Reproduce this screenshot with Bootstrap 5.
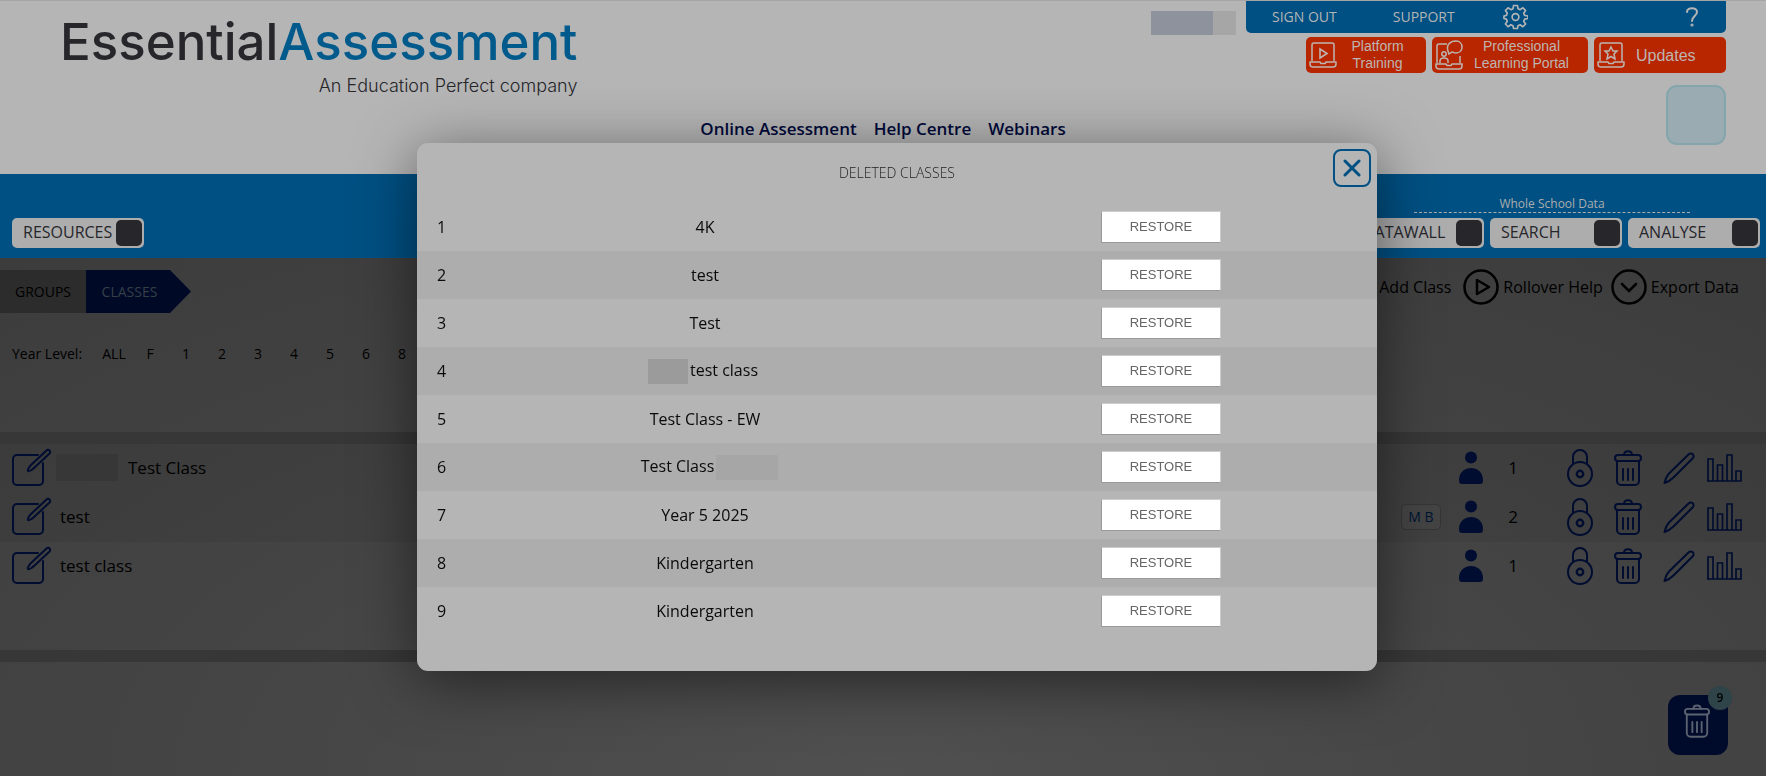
<!DOCTYPE html>
<html lang="en">
<head>
<meta charset="utf-8">
<meta name="viewport" content="width=device-width, initial-scale=1">
<title>Essential Assessment - Classes</title>
<link href="https://cdn.jsdelivr.net/npm/bootstrap@5.3.0/dist/css/bootstrap.min.css" rel="stylesheet">
<style>
  body { font-family: "Open Sans", sans-serif; font-size: 16px; line-height: 24px; color: #000; background: #b5b5b5; overflow: hidden; }
  a { color: inherit; text-decoration: none; }
  .page-shell { min-height: 100vh; border-top: 1px solid #a6a6a6; }
  .site-head { height: 173px; padding: 0 40px; }
  .side-col { flex: 1 1 0; }
  .brand { padding: 9px 0 0 20px; }
  .brand-name { font-family: "Inter", sans-serif; font-size: 51px; line-height: 64px; font-weight: 500; color: #26262b; }
  .brand-name span { color: #005a8c; }
  .brand-tag { font-family: "Inter", sans-serif; font-size: 18px; line-height: 24px; font-weight: 300; color: #26262b; }
  .main-links { font-size: 17px; font-weight: 600; color: #00093a; gap: 17px; padding-bottom: 33px; }
  .util-row { height: 32px; }
  .user-mask { width: 85px; height: 24px; margin: 10px 10px 0 0; background: linear-gradient(90deg, #8d929c 62px, #a6a6a6 62px); }
  .util-bar { width: 480px; height: 32px; background: #005083; color: #b5b5b5; font-size: 14px; line-height: 28px; border-radius: 0 0 5px 5px; padding: 0 24px 0 26px; }
  .promos { gap: 6px; margin-top: 4px; }
  .promo { height: 36px; background: #b82600; color: #bdb5b2; border: 0; border-radius: 5px; font-family: "Liberation Sans", sans-serif; font-size: 14px; line-height: 17px; padding: 0 8px 0 3px; }
  .promo-big { font-size: 16px; padding-left: 11px; }
  .avatar-box { width: 60px; height: 60px; border: 2px solid #85a5ac; background: #9aabb1; border-radius: 11px; margin-top: 12px; }
  .band { height: 84px; background: #005083; padding: 0 6px 10px 12px; }
  .pill-btn { width: 132px; height: 30px; border: 0; border-radius: 5px; background: #adadad; color: #26262b; font-size: 16px; line-height: 24px; padding: 0 2px 0 11px; }
  .pill-btn span { padding-bottom: 2px; }
  .pill-btn i { width: 26px; height: 26px; border-radius: 5px; background: #26262b; }
  .school-label { width: 276px; border-bottom: 1px dashed #adadad; color: #adadad; font-size: 12px; line-height: 16px; margin: 0 70px 5px 0; }
  .work { min-height: calc(100vh - 258px); background: radial-gradient(ellipse 62% 100% at 50% 100%, #505050 0, #454545 60%, #3c3c3c 130%); }
  .crumbs { padding-top: 12px; font-size: 14px; line-height: 43px; }
  .crumb-a { width: 86px; background: #2c2c2c; }
  .crumb-b { width: 105px; padding-right: 18px; background: #000a27; color: #363f48; clip-path: polygon(0 0, 84px 0, 100% 50%, 84px 100%, 0 100%); }
  .actions { padding: 11px 27px 0 0; gap: 4px; }
  .levels { font-size: 14px; padding: 29px 0 0 12px; height: 119px; }
  .levels a { width: 36px; text-align: center; }
  .levels span { width: 84px; }
  .strip { height: 12px; background: #373737; }
  .class-list { height: 206px; font-size: 17px; }
  .class-row { height: 49px; padding: 0 24px 2px 12px; color: #000; }
  .class-row.shade { background: rgba(0,0,0,.06); }
  .class-row svg { color: #000d30; }
  .row-tools { gap: 21px; }
  .name-mask { width: 62px; height: 27px; background: #373737; margin-right: 2px; }
  .init-tag { width: 40px; height: 26px; border: 1px solid #353535; border-radius: 5px; color: #001433; font-size: 14px; line-height: 24px; background: #444; margin-right: 18px; }
  .fab { position: fixed; right: 38px; bottom: 21px; width: 60px; height: 60px; border: 0; border-radius: 12px; background: #000a2b; padding: 0 3px 8px 0; }
  .fab svg { color: #5b6370; }
  .fab b { position: absolute; right: -4px; top: -9px; width: 24px; height: 24px; border-radius: 12px; background: #2e4448; font-size: 12px; line-height: 24px; font-weight: 600; color: #000; }
  .dlg { position: fixed; top: 143px; left: calc(50% + 14px); margin-left: -480px; width: 960px; max-width: 100%; height: 528px; background: #b5b5b5; border-radius: 11px; box-shadow: 0 10px 60px rgba(0,0,0,.5); }
  .dlg-title { font-size: 14px; font-weight: 300; line-height: 60px; color: #222; margin: 0; text-align: center; }
  .dlg-close { position: absolute; top: 6px; right: 6px; width: 38px; height: 38px; border: 2px solid #005083; border-radius: 8px; background: transparent; padding: 0; }
  .del-table { width: 100%; table-layout: fixed; }
  .del-table tr { height: 48px; }
  .del-table tr:nth-child(even) { background: #adadad; }
  .del-table td { padding: 0; text-align: center; vertical-align: middle; color: #0a0a0a; }
  .del-table td:first-child { text-align: left; padding-left: 20px; }
  .restore { display: block; margin: 0 auto; width: 120px; height: 32px; border: 1px solid #999; border-top-color: #ccc; border-right-color: #ccc; background: #fff; color: #666; font-family: "Liberation Sans", sans-serif; font-size: 13px; line-height: 20px; padding: 0; }
  .row-mask { display: inline-block; vertical-align: middle; height: 25px; }
  .mask-first { width: 40px; background: #9b9b9b; margin: 0 2px 0 -4px; }
  .mask-last { width: 62px; background: #a6a6a6; margin: 0 -9px 0 2px; }
</style>
</head>
<body>
<svg width="0" height="0" class="position-absolute" aria-hidden="true">
  <defs>
    <symbol id="edit" viewBox="0 0 40 40"><g fill="none" stroke="currentColor" stroke-width="2" stroke-linejoin="round" stroke-linecap="round"><path d="M26 7H5a4 4 0 0 0-4 4v22a4 4 0 0 0 4 4h22a4 4 0 0 0 4-4V15"/><path d="M34.500 2.500c2-2 5 1 3 3L22 20c-1 1-5 4-6 3s2-5 3-6z"/></g></symbol>
    <symbol id="person" viewBox="0 0 24 33"><circle cx="12" cy="6.500" r="6" fill="currentColor"/><path fill="currentColor" d="M0 29C0 21 6 17 12 17s12 4 12 12c0 3-1 4-3 4H3c-2 0-3-1-3-4z"/></symbol>
    <symbol id="lock" viewBox="0 0 26 38"><g fill="none" stroke="currentColor" stroke-width="2"><circle cx="13" cy="25" r="12"/><circle cx="13" cy="25" r="3.200" stroke-width="2.400"/><path d="M6 15V8a7 7 0 0 1 14 0v7"/></g></symbol>
    <symbol id="trash" viewBox="0 0 28 36"><g fill="none" stroke="currentColor" stroke-width="2" stroke-linecap="round"><rect x="1" y="5" width="26" height="6" rx="3"/><path d="M10 5c0-5 8-5 8 0M3 11v20a4 4 0 0 0 4 4h14a4 4 0 0 0 4-4V11M9 19v11M14 19v11M19 19v11"/></g></symbol>
    <symbol id="pencil" viewBox="0 0 32 32"><path d="M25.500 2.500c3-3 7 1 4 4L11 25c-3 3-6 5-9.500 6 1-4 2-7 5-10z" fill="none" stroke="currentColor" stroke-width="2" stroke-linejoin="round"/></symbol>
    <symbol id="chart" viewBox="0 0 35 28"><path d="M1 27V5h5v22M10.500 27V11h5v16M20 27V1h5v26M29 27V17h5v10zM0 27h34" fill="none" stroke="currentColor" stroke-width="1.700"/></symbol>
    <symbol id="laptop" viewBox="0 0 28 27"><g fill="none" stroke="currentColor" stroke-width="1.500" stroke-linejoin="round"><path d="M3 19V3a2 2 0 0 1 2-2h18a2 2 0 0 1 2 2v16M1 20h10l1 1.500h4l1-1.500h10v2a3 3 0 0 1-3 3H4a3 3 0 0 1-3-3z"/></g></symbol>
  </defs>
</svg>

<div class="page-shell">
  <header class="site-head d-flex">
    <div class="side-col d-flex align-items-start">
      <a href="#" class="brand d-flex flex-column align-items-end text-nowrap">
        <div class="brand-name">Essential<span>Assessment</span></div>
        <div class="brand-tag">An Education Perfect company</div>
      </a>
    </div>
    <nav class="main-links d-flex align-self-end text-nowrap">
      <a href="#">Online Assessment</a><a href="#">Help Centre</a><a href="#">Webinars</a>
    </nav>
    <div class="side-col d-flex flex-column align-items-end">
      <div class="util-row d-flex align-items-start justify-content-end">
        <div class="user-mask"></div>
        <div class="util-bar flex-shrink-0 d-flex align-items-center">
          <a href="#">SIGN OUT</a>
          <a href="#" class="ms-5 ps-2">SUPPORT</a>
          <a href="#" aria-label="Settings" class="ms-5 d-flex"><svg width="25" height="26" viewBox="0 0 26 26" fill="none" stroke="currentColor" stroke-width="1.700"><circle cx="13" cy="13" r="3.500"/><path stroke-linejoin="round" d="M11 1h4l.6 3.400 2.200 1 2.900-2 2.800 2.900-2 2.800 1 2.200 3.500.7v2.500l-3.500.7-1 2.300 2 2.800-2.800 2.800-2.900-2-2.200 1L15 25h-4l-.6-2.900-2.200-1-2.900 2-2.800-2.800 2-2.800-1-2.300L1 14.500V12l2.500-.7 1-2.200-2-2.800 2.800-2.900 2.900 2 2.200-1z"/></svg></a>
          <a href="#" aria-label="Help" class="ms-auto d-flex me-1"><svg width="12" height="20" viewBox="0 0 12 20" fill="none" stroke="currentColor" stroke-width="2" stroke-linecap="round"><path d="M1 5c0-5 10-5 10 0 0 4-5 4-5 9"/><circle cx="6" cy="18" r=".6"/></svg></a>
        </div>
      </div>
      <div class="promos d-flex">
        <button class="promo d-flex align-items-center" style="width:120px"><svg width="28" height="27" fill="none" stroke="currentColor" stroke-width="1.600"><use href="#laptop"/><path d="M11 7v9l7-4.500z"/></svg><span class="flex-fill">Platform<br>Training</span></button>
        <button class="promo d-flex align-items-center" style="width:156px"><svg width="28" height="30" viewBox="0 0 28 30" fill="none" stroke="currentColor" stroke-width="1.500"><path d="M12 4H4a2 2 0 0 0-2 2v17M25 16v7M1 24h10l1 1.500h4l1-1.500h10v2a3 3 0 0 1-3 3H4a3 3 0 0 1-3-3z"/><path d="M14 14l-1-3c-2-6 2-10 8-10 8 0 8 12 0 12-2 0-3-1-4-1z"/><circle cx="9" cy="14" r="2.200"/><path d="M5 23v-2c0-4 8-4 8 0v2"/></svg><span class="flex-fill text-nowrap">Professional<br>Learning Portal</span></button>
        <button class="promo d-flex align-items-center" style="width:132px"><svg width="28" height="27" fill="none" stroke="currentColor" stroke-width="1.500"><use href="#laptop"/><path d="M14 5l2 4h4l-3 3 1 5-4-2.500L10 17l1-5-3-3h4z"/></svg><span class="promo-big">Updates</span></button>
      </div>
      <div class="avatar-box"></div>
    </div>
  </header>

  <div class="band d-flex justify-content-between align-items-end">
    <button class="pill-btn d-flex align-items-center justify-content-between"><span>RESOURCES</span><i></i></button>
    <div class="d-flex flex-column align-items-end">
      <div class="school-label text-center">Whole School Data</div>
      <div class="d-flex" style="gap:6px">
        <button class="pill-btn d-flex align-items-center justify-content-between"><span>DATAWALL</span><i></i></button>
        <button class="pill-btn d-flex align-items-center justify-content-between"><span>SEARCH</span><i></i></button>
        <button class="pill-btn d-flex align-items-center justify-content-between"><span>ANALYSE</span><i></i></button>
      </div>
    </div>
  </div>

  <main class="work">
    <div class="d-flex justify-content-between align-items-start">
      <div class="crumbs d-flex text-center"><a href="#" class="crumb-a">GROUPS</a><a href="#" class="crumb-b">CLASSES</a></div>
      <div class="actions d-flex align-items-center">
        <a href="#" class="pe-2">Add Class</a>
        <svg width="36" height="36" fill="none" stroke="#000" stroke-width="2.500" stroke-linejoin="round"><circle cx="18" cy="18" r="16.500"/><path d="M14 11v14l12-7z"/></svg>
        <a href="#" class="pe-1">Rollover Help</a>
        <svg width="36" height="36" fill="none" stroke="#000" stroke-width="2.500" stroke-linecap="round"><circle cx="18" cy="18" r="16.500"/><path d="M11 15l7 7 7-7"/></svg>
        <a href="#">Export Data</a>
      </div>
    </div>
    <div class="levels d-flex"><span>Year Level:</span><a href="#">ALL</a><a href="#">F</a><a href="#">1</a><a href="#">2</a><a href="#">3</a><a href="#">4</a><a href="#">5</a><a href="#">6</a><a href="#">8</a></div>
    <div class="strip"></div>
    <div class="class-list" id="classes"></div>
    <div class="strip"></div>
  </main>
</div>

<button class="fab" aria-label="Deleted classes"><svg width="26" height="34"><use href="#trash"/></svg><b>9</b></button>

<section class="dlg" role="dialog" aria-labelledby="dlgTitle">
  <h2 class="dlg-title" id="dlgTitle">DELETED CLASSES</h2>
  <button class="dlg-close d-flex align-items-center justify-content-center" aria-label="Close"><svg width="18" height="18" stroke="#005083" stroke-width="3" stroke-linecap="round"><path d="M2 2l14 14M16 2L2 16"/></svg></button>
  <table class="del-table">
    <colgroup><col style="width:5%"><col style="width:50%"><col style="width:45%"></colgroup>
    <tbody id="deleted"></tbody>
  </table>
</section>

<script src="https://cdn.jsdelivr.net/npm/bootstrap@5.3.0/dist/js/bootstrap.bundle.min.js"></script>
<script>
  const icon = (id, w, h) => `<svg width="${w}" height="${h}" class="flex-shrink-0"><use href="#${id}"/></svg>`;
  const classes = [['Test Class', 1, '', true], ['test', 2, 'M B', false], ['test class', 1, '', false]];
  document.getElementById('classes').innerHTML = classes.map(([name, n, tag, masked], i) => `
    <div class="class-row d-flex align-items-center ${i < 2 ? 'shade' : ''}">
      ${icon('edit', 40, 40)}
      ${masked ? '<span class="name-mask ms-1"></span>' : ''}<a href="#" class="ms-2">${name}</a>
      <div class="ms-auto d-flex align-items-center">
        ${tag ? `<span class="init-tag text-center">${tag}</span>` : ''}
        ${icon('person', 24, 33)}
        <span class="text-center" style="width:60px">${n}</span>
        <div class="row-tools d-flex align-items-center ps-4">
          ${icon('lock', 26, 38)}${icon('trash', 28, 36)}${icon('pencil', 32, 32)}
        </div>
        <div class="ps-2 ms-1 d-flex">${icon('chart', 35, 28)}</div>
      </div>
    </div>`).join('');
  const deleted = ['4K', 'test', 'Test', '<span class="row-mask mask-first"></span>test class', 'Test Class - EW',
    'Test Class<span class="row-mask mask-last"></span>', 'Year 5 2025', 'Kindergarten', 'Kindergarten'];
  document.getElementById('deleted').innerHTML = deleted.map((name, i) =>
    `<tr><td>${i + 1}</td><td>${name}</td><td><button class="restore">RESTORE</button></td></tr>`).join('');
</script>
</body>
</html>
